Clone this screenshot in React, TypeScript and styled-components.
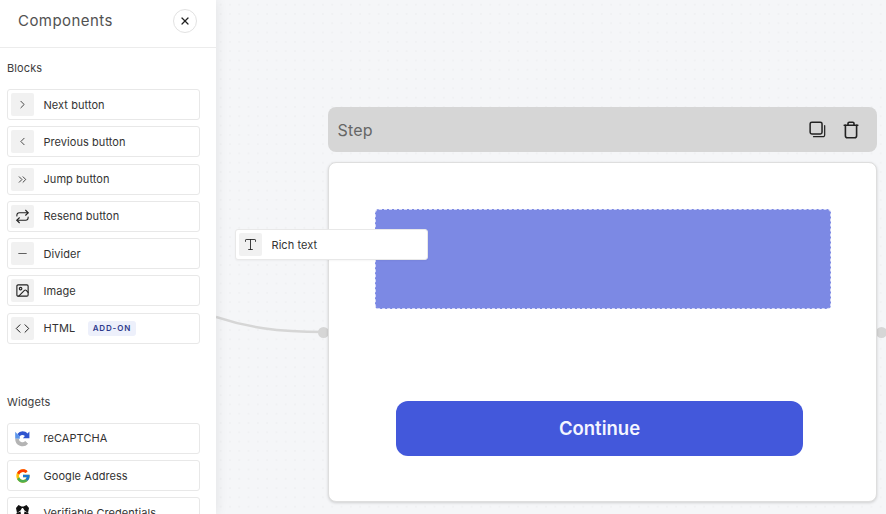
import React from 'react';
import styled, { createGlobalStyle } from 'styled-components';
import { FcGoogle } from 'react-icons/fc';
import { ChevronRight, ChevronLeft, ChevronsRight, Repeat, Minus, ImageIcon, Code, X, Type } from 'lucide-react';

const Global = createGlobalStyle`
  html, body { margin: 0; padding: 0; width: 886px; height: 514px; overflow: hidden; background: #f5f6f8; }
  body { font-family: Inter, "Liberation Sans", sans-serif; }
`;
const Page = styled.div`
  display: flex; width: 886px; height: 514px; overflow: hidden;
`;
const Sidebar = styled.aside`
  width: 216px; height: 514px; flex: none; background: #fff; overflow: hidden;
  box-shadow: 0 0 12px rgba(0,0,0,.09);
  position: relative; z-index: 1;
`;
const SideHead = styled.header`
  height: 48px; box-sizing: border-box; border-bottom: 1px solid #ececec;
  display: flex; align-items: center; justify-content: space-between; padding: 0 19px 6px 18px;
`;
const Title = styled.h1`
  margin: 0; font-size: 15px; font-weight: 400; color: #525252; letter-spacing: .45px;
`;
const CloseBtn = styled.button`
  width: 24px; height: 24px; padding: 0; border: 1px solid #e2e2e2; border-radius: 50%; background: #fff;
  display: flex; align-items: center; justify-content: center; color: #222;
`;
const Section = styled.section<{ $mt: number }>`
  margin-top: ${p => p.$mt}px; padding: 0 16.5px 0 7px;
`;
const SectionLabel = styled.h2`
  margin: 0 0 14px; font-size: 11px; line-height: 14px; font-weight: 400; color: #3d3d3d; letter-spacing: .1px;
`;
const List = styled.div`
  display: flex; flex-direction: column; gap: 6.3px;
`;
const Row = styled.div`
  height: 31px; box-sizing: border-box; border: 1px solid #e8e8e8; border-radius: 3px; background: #fff;
  display: flex; align-items: center; padding-left: 3px; flex: none;
`;
const IconBox = styled.span<{ $plain?: boolean }>`
  width: 23px; height: 23px; flex: none; border-radius: 2px; background: ${p => p.$plain ? 'transparent' : '#f1f1f1'};
  display: flex; align-items: center; justify-content: center; color: #222;
`;
const RowLabel = styled.span`
  margin-left: 9.5px; font-size: 11px; color: #333; letter-spacing: .06px; white-space: nowrap;
`;
const Badge = styled.span`
  margin-left: 12.5px; height: 15px; padding: 0 5px; border-radius: 3px; background: #edf0fb; color: #2e3a8c;
  font-size: 8px; font-weight: 600; letter-spacing: .85px; display: flex; align-items: center;
`;
const Canvas = styled.main`
  flex: 1; position: relative; height: 514px;
  background-color: #f5f6f8;
  background-image: radial-gradient(#f0f1f3 0.8px, transparent 0.9px);
  background-size: 9.3px 9.3px;
`;
const Edge = styled.svg`
  position: absolute; left: 0; top: 310px;
`;
const Port = styled.span<{ $x: number }>`
  position: absolute; left: ${p => p.$x}px; top: 327px; width: 11px; height: 11px; border-radius: 50%; background: #d6d6d6;
`;
const Node = styled.div`
  position: absolute; left: 112px; top: 107px; width: 549px; display: flex; flex-direction: column; gap: 10px;
`;
const StepHead = styled.div`
  height: 45px; border-radius: 8px; background: #d6d6d6; display: flex; align-items: center; padding: 0 18px 0 9.5px; color: #222;
`;
const StepTitle = styled.span`
  flex: 1; font-size: 16px; color: #666; letter-spacing: .2px;
`;
const StepActions = styled.div`
  display: flex; gap: 17px; align-items: center;
`;
const StepBody = styled.div`
  height: 340px; box-sizing: border-box; background: #fff; border: 1px solid #dedede; border-radius: 8px;
  box-shadow: 0 1px 3px rgba(0,0,0,.16);
  padding: 46px 45px 0 46px;
  display: flex; flex-direction: column;
`;
const Drop = styled.div`
  height: 100px; box-sizing: border-box; background: #7c89e4; border: 1px dashed #d5d9f6; border-radius: 4px;
`;
const Continue = styled.button`
  margin: 92px 28px 0 21px; height: 55px; border: 0; border-radius: 12px; background: #4358db; color: #f4f5ff;
  font-family: inherit; font-size: 18.5px; font-weight: 600; padding: 0 0 2px;
`;
const Dragged = styled(Row)`
  position: absolute; left: 19px; top: 229px; width: 193px; box-shadow: 0 1px 2px rgba(0,0,0,.04);
`;

const Recaptcha = () => (
  <svg width="17" height="17" viewBox="0 0 17 17" fill="none">
    <path d="M8.5 1.2c2 0 3.8.9 5 2.3l1.9-1.9v6.6H8.9l2-2.1a3.6 3.6 0 0 0-2.4-1 3.6 3.6 0 0 0-2.8 1.3L3.4 4A7 7 0 0 1 8.5 1.2z" fill="#2f55cf" />
    <path d="M1.2 1.8 3.3 3.9 5.8 6.2V8.7H1.2z" fill="#5b95ea" />
    <path d="M1.2 8.7h3.6a3.7 3.7 0 0 0 6.4 2.4l2.9 2.7A7.4 7.4 0 0 1 1.2 8.7z" fill="#b4b4b4" />
  </svg>
);
const Credentials = () => (
  <svg width="15" height="15" viewBox="0 0 15 15">
    <path d="M3.5 0 6.5 1.5H8.5L11.5 0 14 3 13 8 9.5 5.5 8 3H7L5.5 5.5 2 8 1 3z" fill="#111" />
    <path d="M1.5 8 5.5 6.5 6.5 13 4 15 1.5 12zM13.5 8 9.5 6.5 8.5 13 11 15 13.5 12z" fill="#111" />
  </svg>
);
const DuplicateIcon = () => (
  <svg width="17" height="17" viewBox="0 0 18 18" fill="none" stroke="#222" strokeWidth="1.6" strokeLinecap="round" strokeLinejoin="round">
    <rect x="1.2" y="1.2" width="12.6" height="12.6" rx="1.8" />
    <path d="M16.6 5v9.9a1.7 1.7 0 0 1-1.7 1.7H4.8" strokeWidth="1.3" />
  </svg>
);
const BinIcon = () => (
  <svg width="16" height="18" viewBox="0 0 16 18" fill="none" stroke="#222" strokeWidth="1.6" strokeLinecap="round" strokeLinejoin="round">
    <path d="M1.2 4.2h13.6" />
    <path d="M5 4V2.6c0-.8.5-1.3 1.2-1.3h3.6c.7 0 1.2.5 1.2 1.3V4" />
    <path d="M2.4 4.4v10.3c0 1.2.8 2 2 2h7.2c1.2 0 2-.8 2-2V4.4" />
  </svg>
);

const blocks = [
  { label: 'Next button', icon: <ChevronRight size={13} strokeWidth={1.5} /> },
  { label: 'Previous button', icon: <ChevronLeft size={13} strokeWidth={1.5} /> },
  { label: 'Jump button', icon: <ChevronsRight size={13} strokeWidth={1.5} /> },
  { label: 'Resend button', icon: <Repeat size={15} strokeWidth={1.7} /> },
  { label: 'Divider', icon: <Minus size={13} strokeWidth={1.3} /> },
  { label: 'Image', icon: <ImageIcon size={15} strokeWidth={1.8} /> },
  { label: 'HTML', icon: <Code size={15} strokeWidth={1.6} />, badge: 'ADD-ON' },
];
const widgets = [
  { label: 'reCAPTCHA', icon: <Recaptcha /> },
  { label: 'Google Address', icon: <FcGoogle size={16} /> },
  { label: 'Verifiable Credentials', icon: <Credentials /> },
];

export default function App() {
  return (
    <Page>
      <Global />
      <Sidebar>
        <SideHead>
          <Title>Components</Title>
          <CloseBtn aria-label="Close"><X size={12} strokeWidth={2.4} /></CloseBtn>
        </SideHead>
        <Section $mt={13}>
          <SectionLabel>Blocks</SectionLabel>
          <List>
            {blocks.map(b => (
              <Row key={b.label}>
                <IconBox>{b.icon}</IconBox>
                <RowLabel>{b.label}</RowLabel>
                {b.badge && <Badge>{b.badge}</Badge>}
              </Row>
            ))}
          </List>
        </Section>
        <Section $mt={51}>
          <SectionLabel>Widgets</SectionLabel>
          <List>
            {widgets.map(w => (
              <Row key={w.label}>
                <IconBox $plain>{w.icon}</IconBox>
                <RowLabel>{w.label}</RowLabel>
              </Row>
            ))}
          </List>
        </Section>
      </Sidebar>
      <Canvas>
        <Edge width="112" height="40" viewBox="0 0 112 40" fill="none">
          <path d="M0 7C30 17 60 22 108 22" stroke="#d6d6d6" strokeWidth="2.5" />
        </Edge>
        <Port $x={102} />
        <Port $x={660} />
        <Node>
          <StepHead>
            <StepTitle>Step</StepTitle>
            <StepActions>
              <DuplicateIcon />
              <BinIcon />
            </StepActions>
          </StepHead>
          <StepBody>
            <Drop />
            <Continue>Continue</Continue>
          </StepBody>
        </Node>
        <Dragged>
          <IconBox><Type size={15} strokeWidth={1.4} /></IconBox>
          <RowLabel>Rich text</RowLabel>
        </Dragged>
      </Canvas>
    </Page>
  );
}
